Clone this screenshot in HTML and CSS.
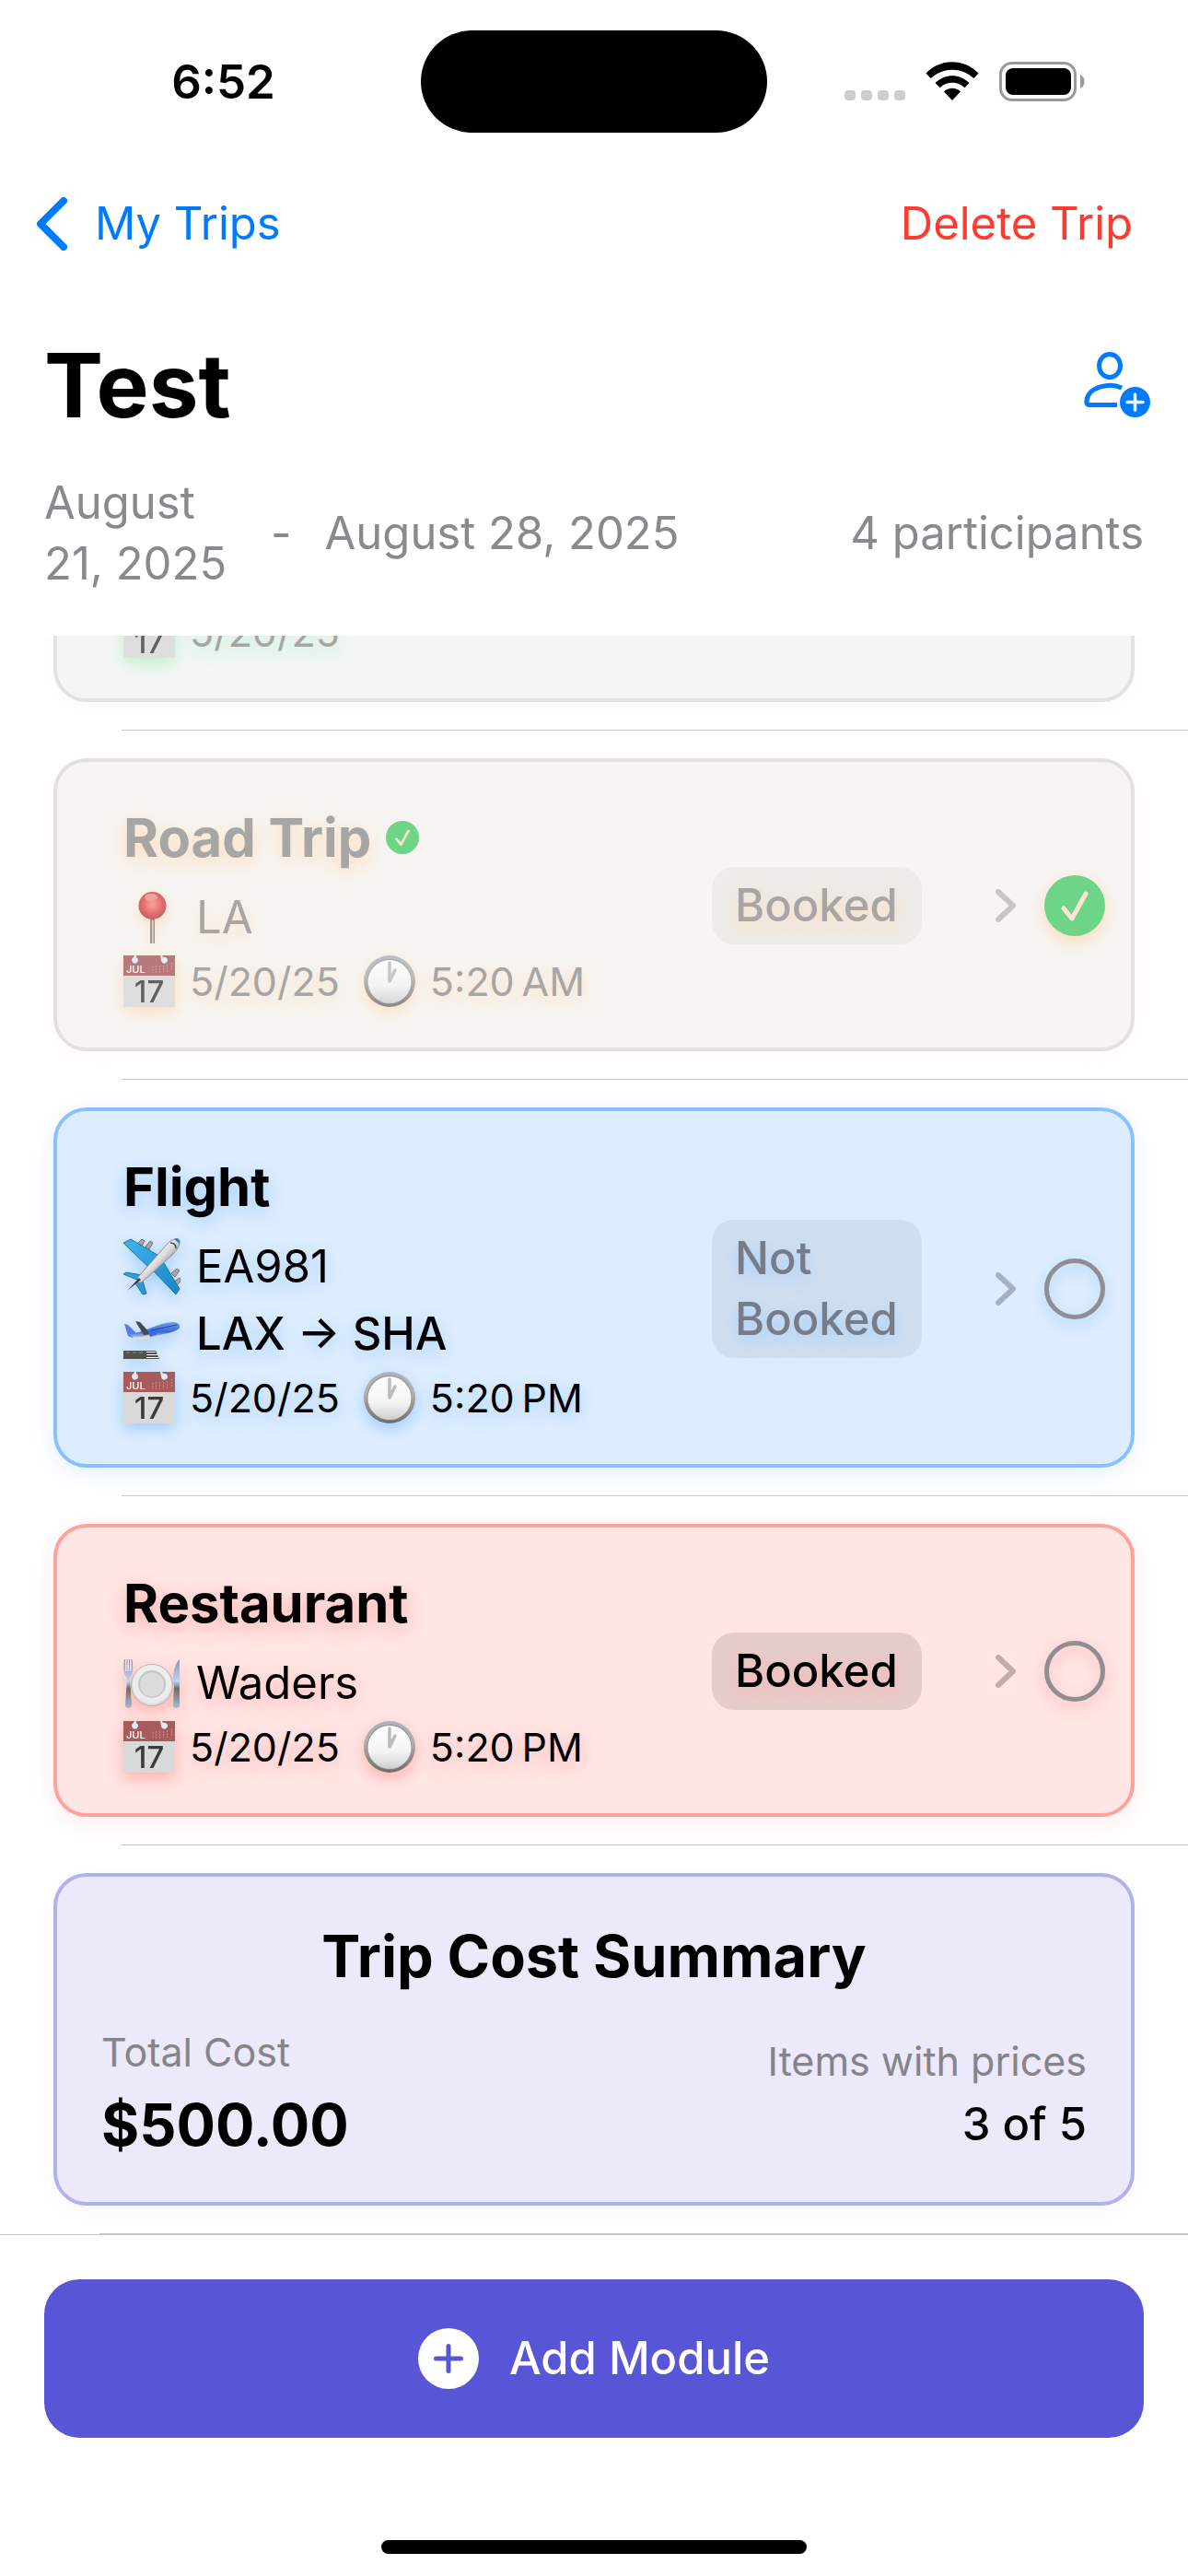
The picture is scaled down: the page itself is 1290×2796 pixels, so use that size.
FILE: index.html
```html
<!DOCTYPE html>
<html lang="en">
<head>
<meta charset="utf-8">
<meta name="viewport" content="width=device-width, initial-scale=1">
<title>Test – My Trips</title>
<link rel="stylesheet" href="styles.css">
</head>
<body>
<svg class="sprite" aria-hidden="true">
  <defs>
    <linearGradient id="hull" x1="0" y1="0" x2="1" y2="1"><stop offset="0.3" stop-color="#ffffff"/><stop offset="0.5" stop-color="#dcdcdc"/><stop offset="0.7" stop-color="#8c8c8c"/></linearGradient>
    <linearGradient id="wing" x1="0" y1="0" x2="1" y2="1"><stop offset="0" stop-color="#3fb4ec"/><stop offset="1" stop-color="#1686c6"/></linearGradient>
    <linearGradient id="dial" x1="0" y1="0" x2="0" y2="1"><stop offset="0" stop-color="#ffffff"/><stop offset="0.6" stop-color="#f4f4f4"/><stop offset="1" stop-color="#cfcfcf"/></linearGradient>
    <linearGradient id="rim" x1="0" y1="0" x2="0" y2="1"><stop offset="0" stop-color="#a9b4c0"/><stop offset="0.4" stop-color="#b4b0ab"/><stop offset="1" stop-color="#6c6c6c"/></linearGradient>
    <radialGradient id="bead" cx="0.5" cy="0.45" r="0.55"><stop offset="0" stop-color="#ff8f88"/><stop offset="0.6" stop-color="#e2504f"/><stop offset="1" stop-color="#b53a44"/></radialGradient>
    <linearGradient id="metal" x1="0" y1="0" x2="0" y2="1"><stop offset="0" stop-color="#8f959c"/><stop offset="0.45" stop-color="#b9d6f2"/><stop offset="0.6" stop-color="#6f6a68"/><stop offset="1" stop-color="#a9bccf"/></linearGradient>
    <linearGradient id="jet" x1="0" y1="0" x2="0" y2="1"><stop offset="0" stop-color="#6f9cf5"/><stop offset="0.6" stop-color="#3d68d8"/><stop offset="1" stop-color="#d9d9d2"/></linearGradient>
  </defs>
  <symbol id="calendar" viewBox="0 0 56 56">
    <path fill="#d9d9d9" d="M0 21h56v35H0z"/>
    <path fill="#a85b5c" d="M0 0h56v22H0z"/>
    <path fill="#dcebfb" d="M12 0h2v2a3.500 3.500 0 1 1-3 0zM40 0h2l1 2a3.500 3.500 0 1 1-2 3z"/>
    <path stroke="#c98a8a" stroke-width="1" stroke-dasharray="2 1" d="M32 12v7M35.500 11v8M39.500 11v8M43.500 11v7M47.500 10v8M52.500 8v9"/>
  </symbol>
  <symbol id="clock" viewBox="0 0 56 56">
    <circle cx="28" cy="28" r="28" fill="url(#rim)"/>
    <circle cx="28" cy="28" r="24.500" fill="#9a9a9a"/>
    <circle cx="28" cy="28.500" r="23.500" fill="url(#dial)"/>
    <path d="M28 8v20l6-12" fill="none" stroke="#bcbcbc" stroke-width="3.500" stroke-linecap="round" stroke-linejoin="round"/>
  </symbol>
  <symbol id="pin" viewBox="0 0 62 62">
    <path d="M29 32h5v27h-5z" fill="#8d7f7f"/><path d="M31 34h1.500v25H31z" fill="#d8d0d0"/>
    <circle cx="31.500" cy="18" r="15" fill="url(#bead)"/>
    <ellipse cx="30" cy="9" rx="7" ry="4" fill="#f28f8c"/>
  </symbol>
  <symbol id="plane" viewBox="0 0 62 62">
    <g fill="#a7a5a3" stroke="#77736f" stroke-width="1"><path d="M15 6l5-5 3 2-4 7zM24 9l5-6 3 2-4 7zM52 38l6-5 3 2-5 7zM55 47l6-4 1 4-5 5z"/></g>
    <path fill="url(#wing)" stroke="#2b6f96" stroke-width="1" d="M0 5l8-4 34 20-12 13zM41 22l20 33-4 6-26-27zM0 39l3-2 17 3-5 5zM20 43l5 17-4 1-8-12z"/>
    <path fill="url(#hull)" stroke="#8f8b88" stroke-width="1" d="M16 42L46 8C51 2 57-1 60 1c3 3 0 10-6 16L22 46c-4 4-8 2-6-4z"/>
    <path fill="#3c3c3c" d="M17 43l-13 14 15-12z"/>
    <path fill="#1d8ccc" d="M55 1c4-2 7 1 6 5z"/><path fill="none" stroke="#444" stroke-width="1.500" d="M51 5c4 0 6 2 6 6"/>
  </symbol>
  <symbol id="departure" viewBox="0 0 62 62">
    <path fill="#4f7ff0" d="M1 20l4 1 9 9-4 5-5-2z"/>
    <path fill="url(#jet)" d="M6 31c16-1 30-12 48-13 5 0 8 3 7 6-3 5-14 6-26 9-11 4-22 4-29-2z"/>
    <path fill="#dcdcd2" d="M10 34c6 1 12 0 18-2l2 3c-6 3-14 3-20-1z"/>
    <path fill="#454850" d="M13 17l5 1 12 13-8 1z"/>
    <path fill="#3d68d8" d="M26 27l9-1 2 5-8 3z"/><path fill="none" stroke="#26448f" d="M30 27l28-6"/>
    <path fill="#525250" d="M0 49h35l4 9H0z"/><path fill="#fff" d="M25 50h10l1 1H25zM25 53h12l1 1H25zM25 56h13v1H25z"/>
    <path stroke="#8b8b8b" d="M3 51h20" stroke-dasharray="4 3"/>
  </symbol>
  <symbol id="plate" viewBox="0 0 62 62">
    <circle cx="31" cy="33" r="22.500" fill="#dcdcdc" stroke="#a9a9a9" stroke-width="0.800"/>
    <circle cx="31" cy="32" r="21" fill="#ececec"/>
    <circle cx="31" cy="32" r="15" fill="#c4c8cc"/>
    <circle cx="31" cy="32.500" r="13" fill="#dcdcdc"/>
    <path fill="url(#metal)" d="M1 5h1v13h1.500V5h1v13H6V5h1v13h1.500V5h1c1 8 1.500 16-2.500 20l2 30c0 4-7 4-7 0l2-30C-1 21 0 13 1 5z"/>
    <path fill="url(#metal)" d="M61 5v50c0 4-7 4-7 0l1-22c-2-1-2-21 6-28z"/>
  </symbol>
  <symbol id="chevron" viewBox="0 0 24 38"><path d="M4 4l16 15L4 34" fill="none" stroke="currentColor" stroke-width="6" stroke-linecap="round" stroke-linejoin="round"/></symbol>
  <symbol id="tick" viewBox="0 0 66 66"><path d="M21 36l9 11 15-27" fill="none" stroke="#fbe7cf" stroke-width="5" stroke-linecap="round" stroke-linejoin="round"/></symbol>
</svg>

<header class="status">
  <span class="status-time">6:52</span>
  <span class="island"></span>
  <span class="status-icons">
    <svg width="66" height="43" viewBox="0 0 66 43" fill="#cccccc" aria-label="No signal"><rect x="0" y="31" width="12" height="11" rx="4"/><rect x="18" y="31" width="12" height="11" rx="4"/><rect x="36" y="31" width="12" height="11" rx="4"/><rect x="54" y="31" width="12" height="11" rx="4"/></svg>
    <svg width="58" height="43" viewBox="0 0 58 43" aria-label="Wi-Fi"><path d="M0.500 12.500C16-4 42-4 57.500 12.500l-5 5.500C39 5.500 19 5.500 5.500 18zM10.500 23c10.500-10.500 26.500-10.500 37 0l-5 5.200c-8-7.200-19-7.200-27 0zM20 32.500c5-5 13-5 18 0l-9 9.500z"/></svg>
    <svg width="94" height="43" viewBox="0 0 94 43" aria-label="Battery full"><rect x="1.500" y="1.500" width="81" height="40" rx="12.500" fill="none" stroke="#9a9a9a" stroke-width="3"/><rect x="7" y="7" width="71" height="29" rx="8"/><path d="M88 14c6 2 6 13 0 15z" fill="#9a9a9a"/></svg>
  </span>
</header>

<nav class="navbar">
  <a class="back" href="#trips"><svg width="34" height="58" viewBox="0 0 34 58" aria-hidden="true"><path d="M30 4L5 29l25 25" fill="none" stroke="currentColor" stroke-width="8" stroke-linecap="round" stroke-linejoin="round"/></svg>My Trips</a>
  <button class="delete" type="button">Delete Trip</button>
</nav>

<section class="trip">
  <div class="trip-head">
    <h1>Test</h1>
    <button class="invite" type="button" aria-label="Add participant">
      <svg width="72" height="72" viewBox="0 0 72 72"><g fill="none" stroke="#007aff" stroke-width="5"><ellipse cx="28" cy="15" rx="11.500" ry="12.500"/><path d="M41 39C29 33 4 37 2.800 54c0 2 1.200 3.500 4 3.500H36" /></g><circle cx="55.500" cy="54.500" r="16.500" fill="#007aff"/><path d="M55.500 46v17M47 54.500h17" stroke="#fff" stroke-width="3.500" stroke-linecap="round"/></svg>
    </button>
  </div>
  <div class="trip-meta">
    <span class="start">August 21, 2025</span><span>-</span><span>August 28, 2025</span><span class="people">4 participants</span>
  </div>
</section>

<main class="list">
  <article class="card hotel done">
    <div class="info"><p class="when"><svg class="icon small" viewBox="0 0 56 56"><use href="#calendar"/><text x="28" y="51" class="cal-day">17</text></svg><span>5/20/25</span></p></div>
  </article>
  <hr>
  <article class="card road done">
    <div class="info">
      <h2>Road Trip <svg class="badge-tick"><circle cx="18" cy="18" r="18" fill="#6ed588"/><use href="#tick" width="36" height="36"/></svg></h2>
      <p class="what"><svg class="icon"><use href="#pin"/></svg><span>LA</span></p>
      <p class="when"><svg class="icon small" viewBox="0 0 56 56"><use href="#calendar"/><text x="3" y="19" class="cal-month">JUL</text><text x="28" y="51" class="cal-day">17</text></svg><span>5/20/25</span><svg class="icon small clock"><use href="#clock"/></svg><span>5:20&thinsp;AM</span></p>
    </div>
    <button class="state" type="button">Booked</button>
    <a class="open" href="#road-trip" aria-label="Open Road Trip"><svg width="24" height="38"><use href="#chevron"/></svg></a>
    <label class="check"><input type="checkbox" aria-label="Road Trip done" checked><svg><use href="#tick"/></svg></label>
  </article>
  <hr>
  <article class="card flight">
    <div class="info">
      <h2>Flight</h2>
      <p class="what"><svg class="icon"><use href="#plane"/></svg><span>EA981</span></p>
      <p class="what route"><svg class="icon"><use href="#departure"/></svg><span>LAX → SHA</span></p>
      <p class="when"><svg class="icon small" viewBox="0 0 56 56"><use href="#calendar"/><text x="3" y="19" class="cal-month">JUL</text><text x="28" y="51" class="cal-day">17</text></svg><span>5/20/25</span><svg class="icon small clock"><use href="#clock"/></svg><span>5:20&thinsp;PM</span></p>
    </div>
    <button class="state muted" type="button">Not Booked</button>
    <a class="open" href="#flight" aria-label="Open Flight"><svg width="24" height="38"><use href="#chevron"/></svg></a>
    <label class="check"><input type="checkbox" aria-label="Flight done"></label>
  </article>
  <hr>
  <article class="card food">
    <div class="info">
      <h2>Restaurant</h2>
      <p class="what"><svg class="icon"><use href="#plate"/></svg><span>Waders</span></p>
      <p class="when"><svg class="icon small" viewBox="0 0 56 56"><use href="#calendar"/><text x="3" y="19" class="cal-month">JUL</text><text x="28" y="51" class="cal-day">17</text></svg><span>5/20/25</span><svg class="icon small clock"><use href="#clock"/></svg><span>5:20&thinsp;PM</span></p>
    </div>
    <button class="state" type="button">Booked</button>
    <a class="open" href="#restaurant" aria-label="Open Restaurant"><svg width="24" height="38"><use href="#chevron"/></svg></a>
    <label class="check"><input type="checkbox" aria-label="Restaurant done"></label>
  </article>
  <hr>
  <article class="card summary">
    <h2>Trip Cost Summary</h2>
    <dl>
      <div><dt>Total Cost</dt><dd class="total">$500.00</dd></div>
      <div class="priced"><dt>Items with prices</dt><dd>3 of 5</dd></div>
    </dl>
  </article>
  <hr class="last">
</main>

<footer class="actions">
  <button class="add" type="button"><svg width="66" height="66" viewBox="0 0 66 66" aria-hidden="true"><circle cx="33" cy="33" r="33" fill="#fff"/><path d="M33 19.500v27M19.500 33h27" stroke="#5856d6" stroke-width="5" stroke-linecap="round"/></svg>Add Module</button>
  <span class="home"></span>
</footer>
</body>
</html>
```
FILE: styles.css
```css
* { box-sizing: border-box; }

body {
  margin: 0;
  min-height: 100vh;
  display: flex;
  flex-direction: column;
  background: #fff;
  color: #000;
  font: 400 49px/66px Inter, "Liberation Sans", sans-serif;
}

h1, h2, p, dl, dd { margin: 0; }
button { border: 0; padding: 0; background: none; font: inherit; color: inherit; }
a { color: inherit; text-decoration: none; }
svg { display: block; flex: none; }
.sprite { position: absolute; width: 0; height: 0; }

/* Status bar */
.status {
  display: grid;
  grid-template-columns: 1fr 376px 1fr;
  align-items: center;
  padding: 33px 28px 0;
}
.status-time { text-align: center; font-size: 51px; font-weight: 600; }
.island { height: 111px; border-radius: 56px; background: #000; }
.status-icons { display: flex; justify-content: center; gap: 22px; }

/* Navigation */
.navbar {
  display: flex;
  align-items: center;
  justify-content: space-between;
  height: 198px;
  padding: 0 60px 0 39px;
}
.back { display: flex; align-items: center; gap: 30px; color: #007aff; }
.delete { color: #ff3b30; }

/* Trip header */
.trip { padding: 0 48px 45px; }
.trip-head { display: flex; align-items: center; justify-content: space-between; height: 152px; margin-bottom: 19px; }
h1 { font-size: 96px; line-height: 120px; font-weight: 700; }
.invite { margin-right: -7px; }
.trip-meta { display: flex; align-items: center; gap: 36px; color: #8a8a8e; }
.start { flex: none; width: 210px; }
.people { margin-left: auto; }

/* Module list, scrolled to its end */
.list {
  flex: 1 0 0;
  display: flex;
  flex-direction: column;
  justify-content: flex-end;
  overflow: hidden;
}
hr { flex: none; height: 1px; margin: 30px 0 30px 132px; border: 0; background: #c6c6c8; }
.last { margin: 30px 0 0 108px; }

.card {
  --glow: #b3b1ed66;
  flex: none;
  display: flex;
  align-items: center;
  margin: 0 58px;
  padding: 46px 28px 44px 72px;
  border: 4px solid var(--edge);
  border-radius: 36px;
  background: var(--fill);
  box-shadow: 0 6px 30px var(--halo);
  text-shadow: 0 6px 20px var(--glow);
}
.hotel { --edge: #e0e3e2; --fill: #f3f6f4; --glow: #b4ecc4; --halo: #34c7590a; }
.road { --edge: #e1e1df; --fill: #f7f4f1; --glow: #fbdcb8; --halo: #ff95000a; }
.flight { --edge: #88c1ff; --fill: #ddedfe; --glow: #a0ccff; --halo: #007aff1a; }
.food { --edge: #ffa29d; --fill: #ffe5e4; --glow: #ffb0ac; --halo: #ff3b301a; }
.summary { --edge: #b3b1ed; --fill: #ebe9fa; --halo: #5856d60a; }
.done { color: #a8a6a4; }

.info { flex: 1; display: flex; flex-direction: column; gap: 9px; }
.card h2 { display: flex; align-items: center; gap: 16px; margin-bottom: 10px; font-size: 58px; line-height: 72px; font-weight: 700; }
.what, .when { display: flex; align-items: center; }
.what { gap: 17px; line-height: 64px; }
.route { font-weight: 500; }
.when { gap: 16px; font-size: 43px; line-height: 56px; }
.icon { width: 62px; height: 62px; filter: drop-shadow(0 6px 8px var(--glow)); }
.small { width: 56px; height: 56px; }
.clock { margin-left: 10px; }
.done .icon { opacity: 0.8; }
.badge-tick { width: 36px; height: 36px; }
.cal-month { font-size: 11px; font-weight: 500; fill: #fff; text-shadow: none; }
.cal-day { font-size: 33px; font-weight: 500; fill: #3c3c3c; text-anchor: middle; text-shadow: none; }

.state {
  width: 228px;
  padding: 9px 25px;
  border-radius: 24px;
  background: #0000001a;
  line-height: 66px;
  font-weight: 500;
  text-align: left;
  text-shadow: inherit;
}
.muted { background: #0000000f; color: #757d8b; }
.done .state { background: #00000009; }
.open { margin: 0 30px 0 79px; color: #0000003f; }
.done .open { color: #00000030; }
.check { display: grid; width: 66px; height: 66px; filter: drop-shadow(0 6px 8px var(--glow)); }
.check > * { grid-area: 1 / 1; width: 66px; height: 66px; }
.check input { appearance: none; margin: 0; border: 5px solid #8e8e93; border-radius: 50%; }
.check input:checked { border: 0; background: #6ed588; }

/* Cost summary */
.summary { display: block; padding: 46px 48px 44px; text-shadow: none; }
.summary h2 { justify-content: center; margin-bottom: 37px; font-size: 63px; line-height: 80px; }
.summary dl { display: flex; align-items: center; justify-content: space-between; }
dt { margin-bottom: 12px; font-size: 43px; line-height: 54px; color: #858489; }
dd { line-height: 60px; font-weight: 500; }
.total { font-size: 63px; line-height: 80px; font-weight: 700; }
.priced { text-align: right; }

/* Bottom bar */
.actions { display: flex; flex-direction: column; align-items: center; padding: 48px 48px 24px; border-top: 1px solid #c6c6c8; }
.add {
  display: flex;
  align-items: center;
  justify-content: center;
  gap: 33px;
  width: 100%;
  height: 172px;
  margin-bottom: 111px;
  border-radius: 38px;
  background: #5856d6;
  color: #fff;
  font-weight: 500;
}
.home { width: 462px; height: 15px; border-radius: 8px; background: #000; }
```
